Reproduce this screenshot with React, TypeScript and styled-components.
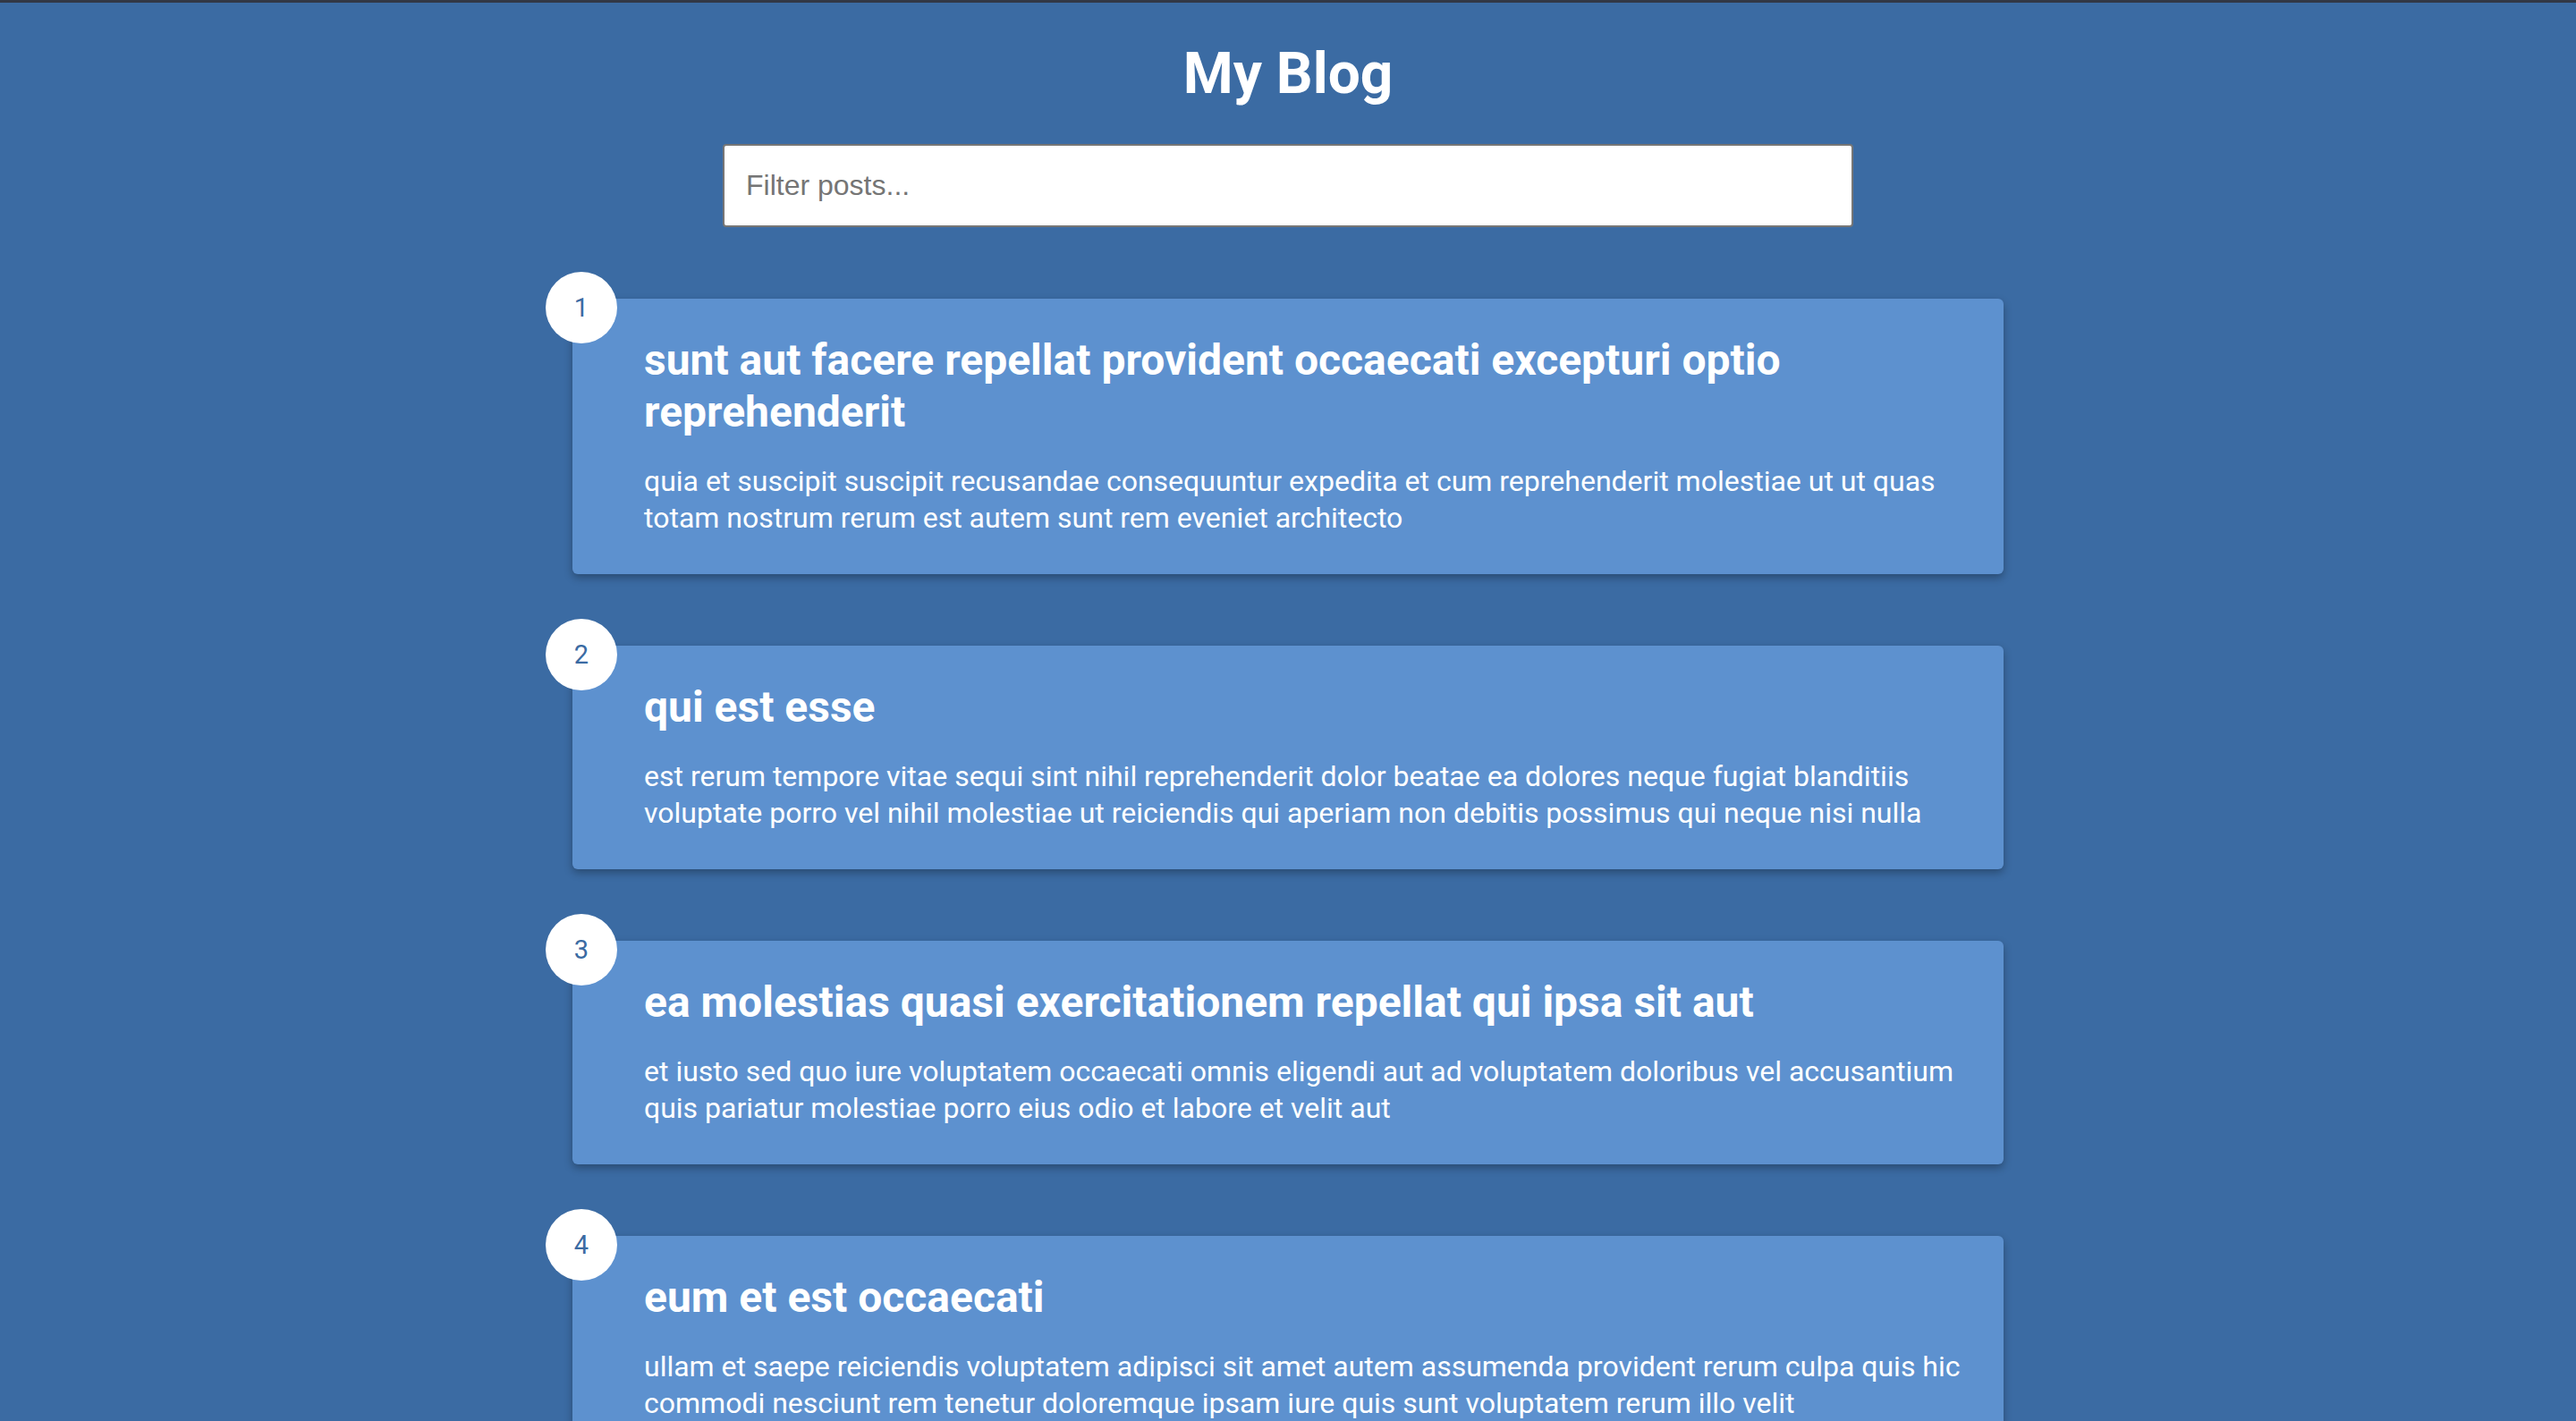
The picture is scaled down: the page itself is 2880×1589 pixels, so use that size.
import React from "react";
import styled, { createGlobalStyle } from "styled-components";

const GlobalStyle = createGlobalStyle`
  html, body {
    margin: 0;
    padding: 0;
    background: #3b6ba3;
  }
  body {
    font-family: Roboto, "Noto Sans", sans-serif;
    border-top: 3px solid #323846;
  }
  * { box-sizing: border-box; }
`;

const Page = styled.div`
  display: flex;
  flex-direction: column;
  align-items: center;
  padding: 42px 0 80px;
`;

const Title = styled.h1`
  margin: 0;
  font-family: Roboto, sans-serif;
  font-weight: 700;
  font-size: 64px;
  line-height: 75px;
  color: #ffffff;
`;

const Filter = styled.input`
  margin-top: 41px;
  width: 1264px;
  height: 93px;
  padding: 0 24px;
  border: 2px solid #767676;
  border-radius: 4px;
  background: #ffffff;
  font-family: "Liberation Sans", Arial, sans-serif;
  font-size: 32px;
  color: #222;
  outline: none;
  &::placeholder {
    color: #757575;
  }
`;

const List = styled.div`
  margin-top: 80px;
  width: 1600px;
  display: flex;
  flex-direction: column;
  gap: 80.5px;
`;

const Card = styled.article`
  position: relative;
  background: #5d91cf;
  border-radius: 6px;
  padding: 40px 40px 41px 80px;
  box-shadow: 0 4px 10px rgba(0, 0, 0, 0.3);
  color: #ffffff;
`;

const Badge = styled.div`
  position: absolute;
  top: -30px;
  left: -30px;
  width: 80px;
  height: 80px;
  border-radius: 50%;
  background: #ffffff;
  display: flex;
  align-items: center;
  justify-content: center;
  font-family: Roboto, sans-serif;
  font-size: 29px;
  color: #3b6ba3;
`;

const PostTitle = styled.h2`
  margin: 0;
  font-family: Roboto, sans-serif;
  font-weight: 700;
  font-size: 48px;
  line-height: 58px;
`;

const PostBody = styled.p`
  margin: 28px 0 0;
  font-family: Roboto, sans-serif;
  font-weight: 400;
  font-size: 32px;
  line-height: 41.25px;
`;

const posts = [
  {
    id: 1,
    title:
      "sunt aut facere repellat provident occaecati excepturi optio reprehenderit",
    body: "quia et suscipit suscipit recusandae consequuntur expedita et cum reprehenderit molestiae ut ut quas totam nostrum rerum est autem sunt rem eveniet architecto",
  },
  {
    id: 2,
    title: "qui est esse",
    body: "est rerum tempore vitae sequi sint nihil reprehenderit dolor beatae ea dolores neque fugiat blanditiis voluptate porro vel nihil molestiae ut reiciendis qui aperiam non debitis possimus qui neque nisi nulla",
  },
  {
    id: 3,
    title: "ea molestias quasi exercitationem repellat qui ipsa sit aut",
    body: "et iusto sed quo iure voluptatem occaecati omnis eligendi aut ad voluptatem doloribus vel accusantium quis pariatur molestiae porro eius odio et labore et velit aut",
  },
  {
    id: 4,
    title: "eum et est occaecati",
    body: "ullam et saepe reiciendis voluptatem adipisci sit amet autem assumenda provident rerum culpa quis hic commodi nesciunt rem tenetur doloremque ipsam iure quis sunt voluptatem rerum illo velit",
  },
  {
    id: 5,
    title: "nesciunt quas odio",
    body: "repudiandae veniam quaerat sunt sed alias aut fugiat sit autem sed est voluptatem omnis possimus esse voluptatibus quis est aut tenetur dolor neque",
  },
];

export default function App() {
  const [query, setQuery] = React.useState("");
  const shown = posts.filter(
    (p) =>
      p.title.toLowerCase().includes(query.toLowerCase()) ||
      p.body.toLowerCase().includes(query.toLowerCase())
  );
  return (
    <>
      <GlobalStyle />
      <Page>
        <Title>My Blog</Title>
        <Filter
          type="text"
          placeholder="Filter posts..."
          value={query}
          onChange={(e) => setQuery(e.target.value)}
        />
        <List>
          {shown.map((p) => (
            <Card key={p.id}>
              <Badge>{p.id}</Badge>
              <PostTitle>{p.title}</PostTitle>
              <PostBody>{p.body}</PostBody>
            </Card>
          ))}
        </List>
      </Page>
    </>
  );
}
